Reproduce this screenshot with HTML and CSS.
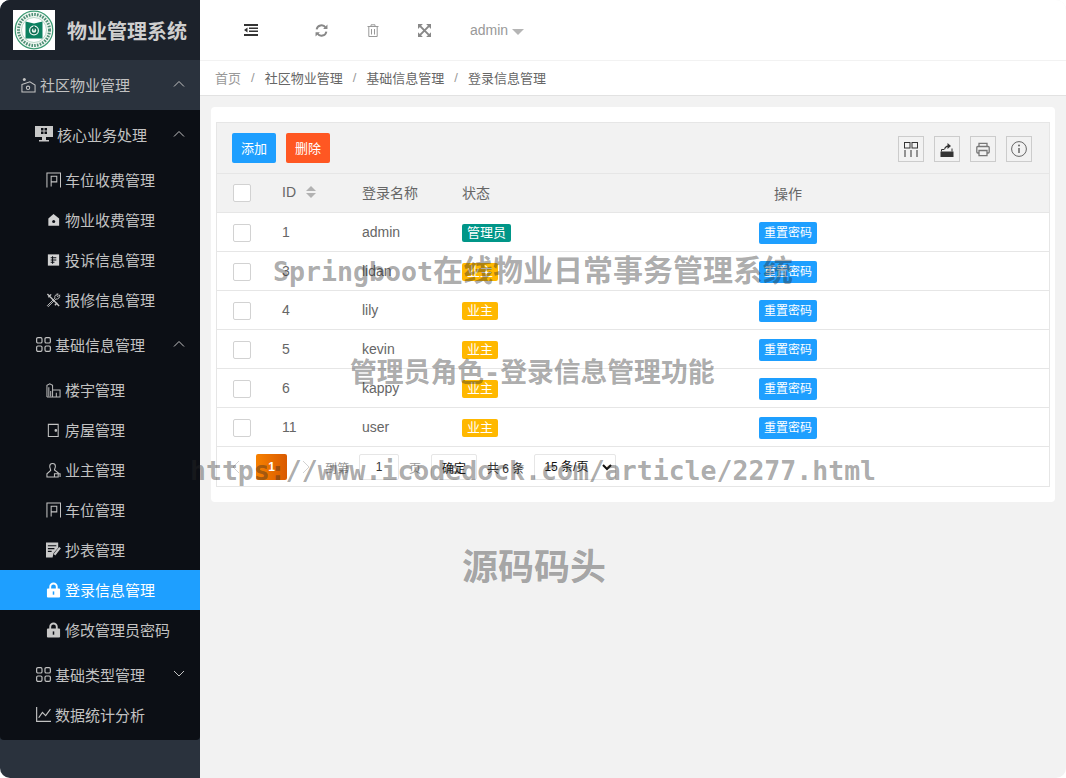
FILE: index.html
```html
<!DOCTYPE html>
<html lang="zh-CN">
<head>
<meta charset="utf-8">
<title>物业管理系统</title>
<link rel="stylesheet" href="styles.css">
</head>
<body>
<div class="app">
  <aside class="sidebar">
    <div class="brand">
      <svg class="logo" viewBox="0 0 42 40"><rect width="42" height="40" fill="#fff"/><circle cx="21" cy="20" r="18.800" fill="#f1f7f2" stroke="#3b9a73" stroke-width="1.200"/><circle cx="21" cy="20" r="15.500" fill="none" stroke="#4d8f75" stroke-width="3" stroke-dasharray="1.600 1.200"/><circle cx="21" cy="20" r="12.500" fill="#fff" stroke="#8dbfa8" stroke-width=".6"/><path fill="#0c8060" d="M12.500 11.500 21 13.500l8.500-2v17h-17z"/><circle cx="21" cy="20.500" r="5" fill="#e8f3ee"/><circle cx="21" cy="20.500" r="3" fill="none" stroke="#0c6a50" stroke-width="1.500"/><rect x="20.300" y="16" width="1.400" height="4.500" fill="#0c6a50"/></svg>
      <span class="brand-name">物业管理系统</span>
    </div>
    <div class="top-item">
      <svg class="ic" viewBox="0 0 16 16" fill="none" stroke="#c4c4c4" stroke-width="1.100"><circle cx="3.500" cy="2" r="1.600" fill="#c4c4c4" stroke="none"/><path d="M1 7.500 9.500 4.500l5.500 3.500v7.500H1z"/><circle cx="7.500" cy="11" r="1.800"/></svg>
      <span>社区物业管理</span>
      <svg class="chev" viewBox="0 0 12 7" fill="none" stroke="#c2c2c2" stroke-width="1"><path d="M1 6.500 6 1.500l5 5"/></svg>
    </div>
    <nav class="menu">
      <div class="parent">
        <svg class="ic ic-par1" viewBox="0 0 18 16"><path fill="#c8c8c8" d="M0 0h18v11h-7v3h3v1.500H4V14h3v-3H0z"/><path fill="#0c0f15" d="M6 2h2.500v2.500H6zm3.500 0H12v2.500H9.500zM6 5.500h2.500V8H6zm3.500 0H12V8H9.500z"/></svg>
        <span>核心业务处理</span>
        <svg class="chev" viewBox="0 0 12 7" fill="none" stroke="#c2c2c2" stroke-width="1"><path d="M1 6.500 6 1.500l5 5"/></svg>
      </div>
      <ul class="sub">
        <li class="sub-item"><svg class="ic" viewBox="0 0 16 16" fill="none" stroke="#c4c4c4" stroke-width="1.100"><path d="M1 16V.6h14.500V16"/><path d="M5.500 15V4h6v6h-6"/></svg><span>车位收费管理</span></li>
        <li class="sub-item"><svg class="ic" viewBox="0 0 16 16"><path fill="#d2d2d2" d="M8 1.500 14 6.500V14H2.500V6.500z"/><circle cx="8.200" cy="9.500" r="1.600" fill="#0c0f15"/></svg><span>物业收费管理</span></li>
        <li class="sub-item"><svg class="ic" viewBox="0 0 16 16"><rect x="2" y="2" width="12" height="12" fill="#d2d2d2"/><path stroke="#0c0f15" stroke-width="1.100" d="M5 5.500h6M5 8h6M5 10.500h4M7 4v8"/></svg><span>投诉信息管理</span></li>
        <li class="sub-item"><svg class="ic" viewBox="0 0 16 16" fill="none" stroke="#c4c4c4" stroke-width="1.500"><path d="M1.500 1.500 14 14.500M2.500 5 5.500 2M12 11l-2.500 2.500"/><path d="M14.500 2.500 12.500 4.500 11.500 3.500 13 1.500A3.500 3.500 0 0 0 9.500 6L1.500 14l1 1 8-8a3.500 3.500 0 0 0 4-4.500z" stroke-width="1"/></svg><span>报修信息管理</span></li>
      </ul>
      <div class="parent">
        <svg class="ic ic-par2" viewBox="0 0 14 14" fill="none" stroke="#c2c2c2" stroke-width="1.100"><rect x=".6" y=".6" width="5" height="5" rx="1.200"/><rect x="8.400" y=".6" width="5" height="5" rx="1.200"/><rect x=".6" y="8.400" width="5" height="5" rx="1.200"/><rect x="8.400" y="8.400" width="5" height="5" rx="1.200"/></svg>
        <span>基础信息管理</span>
        <svg class="chev" viewBox="0 0 12 7" fill="none" stroke="#c2c2c2" stroke-width="1"><path d="M1 6.500 6 1.500l5 5"/></svg>
      </div>
      <ul class="sub">
        <li class="sub-item"><svg class="ic" viewBox="0 0 16 16" fill="none" stroke="#b8b8b8" stroke-width="1.100"><path d="M1 15.500V3l3-1.500L7 3v12.500M7 8h8v7.500H1"/><path d="M3 5v10M5 9v6M11 11v4.500"/></svg><span>楼宇管理</span></li>
        <li class="sub-item"><svg class="ic" viewBox="0 0 16 16" fill="none" stroke="#c4c4c4" stroke-width="1.100"><path d="M2.500 2H13v13H2.500z"/><circle cx="10.500" cy="8.500" r=".9" fill="#c4c4c4"/></svg><span>房屋管理</span></li>
        <li class="sub-item"><svg class="ic" viewBox="0 0 16 16" fill="none" stroke="#c4c4c4" stroke-width="1.100"><path d="M7 1a3 3 0 0 1 3 3c0 2-1 3-1 4l4 3v4.500H1V12l4-3.500C5 7 4 6 4 4a3 3 0 0 1 3-3z"/><path d="M9 15.500V12h6v3.500"/></svg><span>业主管理</span></li>
        <li class="sub-item"><svg class="ic" viewBox="0 0 16 16" fill="none" stroke="#c4c4c4" stroke-width="1.100"><path d="M1 16V.6h14.500V16"/><path d="M5.500 15V4h6v6h-6"/></svg><span>车位管理</span></li>
        <li class="sub-item"><svg class="ic" viewBox="0 0 16 16"><path fill="#c8c8c8" d="M0 0h13v5.500L8 11.500 7 16H0z"/><path stroke="#0c0f15" stroke-width="1.200" d="M2 3.500h9M2 6.500h7M2 9.500h4"/><path stroke="#c8c8c8" stroke-width="2.400" d="m9 13 6-7.500"/></svg><span>抄表管理</span></li>
        <li class="sub-item active"><svg class="ic" viewBox="0 0 16 16"><path fill="none" stroke="#fff" stroke-width="2" d="M4.500 7V4.500a3.500 3.500 0 0 1 7 0V7"/><rect x="1" y="6.500" width="14" height="9.500" rx="1" fill="#fff"/><rect x="7.200" y="9.500" width="1.600" height="3.500" fill="#1e9fff"/></svg><span>登录信息管理</span></li>
        <li class="sub-item"><svg class="ic" viewBox="0 0 16 16"><path fill="none" stroke="#c8c8c8" stroke-width="2" d="M4.500 7V4.500a3.500 3.500 0 0 1 7 0V7"/><rect x="1" y="6.500" width="14" height="9.500" rx="1" fill="#c8c8c8"/><rect x="7.200" y="9.500" width="1.600" height="3.500" fill="#0c0f15"/></svg><span>修改管理员密码</span></li>
      </ul>
      <div class="parent">
        <svg class="ic ic-par2" viewBox="0 0 14 14" fill="none" stroke="#c2c2c2" stroke-width="1.100"><rect x=".6" y=".6" width="5" height="5" rx="1.200"/><rect x="8.400" y=".6" width="5" height="5" rx="1.200"/><rect x=".6" y="8.400" width="5" height="5" rx="1.200"/><rect x="8.400" y="8.400" width="5" height="5" rx="1.200"/></svg>
        <span>基础类型管理</span>
        <svg class="chev" viewBox="0 0 12 7" fill="none" stroke="#c2c2c2" stroke-width="1"><path d="M1 1 6 6l5-5"/></svg>
      </div>
      <div class="parent">
        <svg class="ic ic-par2" viewBox="0 0 14 14" fill="none" stroke="#c2c2c2" stroke-width="1.100"><path d="M.6 0v13.400H14M2.500 10 6 5l3 3 4.500-6"/></svg>
        <span>数据统计分析</span>
      </div>
    </nav>
    <div class="sidebar-foot"></div>
  </aside>

  <main class="main">
    <header class="topbar">
      <svg class="tb-ic tb-indent" viewBox="0 0 14 12"><path fill="#333" d="M0 0h14v2H0zM5 3.500h9v1.500H5zM5 6.500h9V8H5zM0 10h14v2H0zM3.500 3.500v5L0 6z"/></svg>
      <svg class="tb-ic tb-refresh" viewBox="0 0 12 12" fill="none" stroke="#888" stroke-width="1.800"><path d="M1.500 5A4.600 4.600 0 0 1 9.800 3.200M10.500 7A4.600 4.600 0 0 1 2.200 8.800"/><path fill="#888" stroke="none" d="M11.500.500v4h-4zM.500 11.500v-4h4z"/></svg>
      <svg class="tb-ic tb-trash" viewBox="0 0 12 13" fill="none" stroke="#999" stroke-width="1"><path d="M.5 2.500h11M4 2.500V.8h4v1.700M1.800 2.500v10h8.400v-10M4.500 5v5.500M7.500 5v5.500"/></svg>
      <svg class="tb-ic tb-expand" viewBox="0 0 12 12"><path fill="#888" d="M0 0h4.500L0 4.500zM12 0v4.500L7.500 0zM0 12V7.500L4.500 12zM12 12H7.500L12 7.500z"/><path stroke="#888" stroke-width="1.800" d="m2 2 8 8M10 2l-8 8"/></svg>
      <span class="user">admin</span><span class="caret"></span>
    </header>
    <div class="crumbs">
      <span class="crumb-first">首页</span><span class="sep">/</span><span>社区物业管理</span><span class="sep">/</span><span>基础信息管理</span><span class="sep">/</span><span>登录信息管理</span>
    </div>
    <div class="content">
      <section class="card">
        <div class="grid">
          <div class="toolbar">
            <button class="btn btn-blue">添加</button>
            <button class="btn btn-red">删除</button>
            <div class="tools">
              <span class="tool"><svg viewBox="0 0 14 15" fill="none" stroke="#333" stroke-width="1"><rect x=".5" y=".5" width="5.500" height="5.500"/><rect x="8" y=".5" width="5.500" height="5.500"/><path d="M1 8v7M7 8v7M13 8v7"/></svg></span>
              <span class="tool"><svg viewBox="0 0 14 15"><path fill="#333" d="M.5 9.500h13V15H.5z"/><path fill="none" stroke="#333" d="M1.500 9.500V7.500h2.500M12 9.500V6.500"/><path fill="#333" d="M4 7.500C4.500 4.500 6.500 3.500 7.500 3.500V1L11 4 7.500 7V5C6.500 5 5.500 6 5 7.500z"/></svg></span>
              <span class="tool"><svg viewBox="0 0 14 14" fill="none" stroke="#777" stroke-width="1.300"><path d="M3 4V.8h8V4M3 10.500H1.800a1 1 0 0 1-1-1V5a1 1 0 0 1 1-1h10.400a1 1 0 0 1 1 1v4.500a1 1 0 0 1-1 1H11"/><path d="M3 8h8v5.200H3z"/></svg></span>
              <span class="tool tool-info"><svg viewBox="0 0 16 16" fill="none" stroke="#666" stroke-width="1"><circle cx="8" cy="8" r="7.400"/><path d="M8 7v5" stroke-width="1.500"/><circle cx="8" cy="4.500" r="1" fill="#666" stroke="none"/></svg></span>
            </div>
          </div>
          <table class="data">
            <colgroup><col class="c-check"><col class="c-id"><col class="c-name"><col class="c-state"><col></colgroup>
            <thead>
              <tr><th><span class="box"></span></th><th><span class="th-id">ID<span class="sort"><i class="up"></i><i class="down"></i></span></span></th><th>登录名称</th><th>状态</th><th class="center">操作</th></tr>
            </thead>
            <tbody>
              <tr><td><span class="box"></span></td><td>1</td><td>admin</td><td><span class="tag tag-green">管理员</span></td><td class="center"><span class="reset">重置密码</span></td></tr>
              <tr><td><span class="box"></span></td><td>3</td><td>lidan</td><td><span class="tag tag-yellow">业主</span></td><td class="center"><span class="reset">重置密码</span></td></tr>
              <tr><td><span class="box"></span></td><td>4</td><td>lily</td><td><span class="tag tag-yellow">业主</span></td><td class="center"><span class="reset">重置密码</span></td></tr>
              <tr><td><span class="box"></span></td><td>5</td><td>kevin</td><td><span class="tag tag-yellow">业主</span></td><td class="center"><span class="reset">重置密码</span></td></tr>
              <tr><td><span class="box"></span></td><td>6</td><td>kappy</td><td><span class="tag tag-yellow">业主</span></td><td class="center"><span class="reset">重置密码</span></td></tr>
              <tr><td><span class="box"></span></td><td>11</td><td>user</td><td><span class="tag tag-yellow">业主</span></td><td class="center"><span class="reset">重置密码</span></td></tr>
            </tbody>
          </table>
          <div class="pager">
            <svg class="pg-arrow" viewBox="0 0 8 14" fill="none" stroke="#d2d2d2"><path d="M7 1 1 7l6 6"/></svg>
            <span class="pg-cur">1</span>
            <svg class="pg-arrow" viewBox="0 0 8 14" fill="none" stroke="#d2d2d2"><path d="m1 1 6 6-6 6"/></svg>
            <span class="pg-label pg-first">到第</span>
            <input class="pg-input" value="1">
            <span class="pg-label">页</span>
            <button class="pg-go">确定</button>
            <span class="pg-total">共 6 条</span>
            <select class="pg-size"><option>15 条/页</option></select>
          </div>
        </div>
      </section>
    </div>
  </main>

  <div class="wm wm-1"><span class="wm-latin">Springboot</span>在线物业日常事务管理系统</div>
  <div class="wm wm-2">管理员角色<span class="wm-latin">-</span>登录信息管理功能</div>
  <div class="wm wm-3">https://www.icodedock.com/article/2277.html</div>
  <div class="wm wm-4">源码码头</div>
</div>
</body>
</html>
```
FILE: styles.css
```css
* { box-sizing: border-box; }
html, body { margin: 0; height: 100%; background: #fff; }
body { font-family: "Liberation Sans", "Noto Sans CJK SC", sans-serif; font-size: 14px; color: #666; overflow: hidden; }
ul { margin: 0; padding: 0; list-style: none; }
svg { display: block; flex: none; }

.app { position: relative; display: flex; width: 1066px; height: 778px; border-radius: 10px; overflow: hidden; }

.sidebar { width: 200px; flex: none; display: flex; flex-direction: column; background: #2a323d; font-size: 15px; color: #c2c2c2; }
.brand { height: 60px; display: flex; align-items: center; padding-left: 13px; background: #1c222b; }
.logo { width: 42px; height: 40px; }
.brand-name { margin-left: 12px; font-size: 20px; font-weight: 700; color: #cfcfcf; }
.top-item { height: 50px; display: flex; align-items: center; padding-left: 21px; background: #2a323d; position: relative; }
.top-item .ic { width: 15px; height: 16px; margin-right: 4px; }
.top-item span, .parent span, .sub-item span { margin-top: -1px; }
.menu { padding: 5px 0; background: #0c0f15; border-radius: 0 0 4px 4px; }
.parent { height: 40px; display: flex; align-items: center; padding-left: 35px; position: relative; }
.chev { position: absolute; right: 15px; top: 50%; width: 12px; height: 7px; margin-top: -5px; }
.top-item .chev { margin-top: -5px; }
.ic-par1 { width: 18px; height: 16px; margin-right: 4px; margin-top: -2px; }
.ic-par2 { width: 15px; height: 15px; margin-right: 4px; margin-left: 1px; margin-top: -2px; }
.sub { padding: 5px 0; }
.sub-item { height: 40px; display: flex; align-items: center; padding-left: 46px; }
.sub-item .ic { width: 15px; height: 16px; margin-right: 4px; }
.sub-item.active { background: #1e9fff; color: #fff; }
.sidebar-foot { flex: 1; }

.main { flex: 1; min-width: 0; display: flex; flex-direction: column; background: #f2f2f2; }
.topbar { height: 61px; flex: none; display: flex; align-items: center; background: #fff; border-bottom: 1px solid #f2f2f2; padding-left: 44px; }
.tb-ic { flex: none; }
.tb-indent { width: 14px; height: 12px; }
.tb-refresh { width: 13px; height: 13px; margin-left: 57px; }
.tb-trash { width: 12px; height: 13px; margin-left: 39px; }
.tb-expand { width: 13px; height: 13px; margin-left: 39px; }
.user { margin-left: 39px; color: #999; }
.caret { margin-left: 4px; margin-top: 3px; width: 0; height: 0; border: 6px solid transparent; border-top: 6px solid #b5b5b5; border-bottom: 0; border-left-width: 6.5px; border-right-width: 6.5px; }
.crumbs { height: 35px; flex: none; display: flex; align-items: center; padding: 0 0 2px 15px; background: #fff; border-bottom: 1px solid #e2e2e2; font-size: 13px; color: #666; }
.crumb-first { color: #999; }
.sep { margin: 0 10px; color: #999; }

.content { flex: 1; padding: 11px 11px 0 11px; }
.card { background: #fff; border-radius: 4px; padding: 15px 5px; }
.grid { border: 1px solid #e6e6e6; }

.toolbar { height: 51px; display: flex; align-items: center; padding: 0 17px 0 15px; background: #f2f2f2; border-bottom: 1px solid #e6e6e6; }
.btn { height: 30px; width: 44px; padding: 0 0 2px; border: 0; border-radius: 2px; color: #fff; font: 13px "Liberation Sans", "Noto Sans CJK SC", sans-serif; margin-right: 10px; }
.btn-blue { background: #1e9fff; }
.btn-red { background: #ff5722; }
.tools { margin-left: auto; display: flex; gap: 10px; padding-top: 2px; }
.tool { width: 26px; height: 26px; border: 1px solid #ccc; display: flex; align-items: center; justify-content: center; }
.tool svg { width: 14px; height: 15px; }
.tool-info svg { width: 16px; height: 16px; }

.data { width: 100%; border-collapse: collapse; table-layout: fixed; }
.c-check { width: 50px; }
.c-id { width: 80px; }
.c-name { width: 100px; }
.c-state { width: 80px; }
.data th { height: 38px; background: #f2f2f2; font-weight: 400; text-align: left; padding: 0 15px 1px; border-bottom: 1px solid #e6e6e6; }
.data td { height: 39px; padding: 0 15px; border-bottom: 1px solid #e6e6e6; }
.data .center { text-align: center; padding: 0; }
.box { display: block; width: 18px; height: 18px; margin: 2px 0 0 1px; background: #fff; border: 1px solid #d2d2d2; border-radius: 2px; }
.th-id { display: inline-flex; align-items: center; }
.sort { display: inline-flex; flex-direction: column; gap: 2px; margin-left: 10px; }
.sort i { width: 0; height: 0; border-left: 5px solid transparent; border-right: 5px solid transparent; }
.sort .up { border-bottom: 5px solid #b2b2b2; }
.sort .down { border-top: 5px solid #b2b2b2; }
.tag { display: inline-block; height: 18px; line-height: 18px; margin-top: 2px; padding: 0 5px; border-radius: 2px; color: #fff; font-size: 13px; vertical-align: middle; }
.tag-green { background: #009688; }
.tag-yellow { background: #ffb800; }
.reset { display: inline-block; height: 22px; line-height: 22px; width: 58px; margin-top: 2px; border-radius: 2px; background: #1e9fff; color: #fff; font-size: 12px; vertical-align: middle; text-align: center; }

.pager { height: 39px; display: flex; align-items: center; padding: 2px 0 0 15px; font-size: 12px; }
.pg-arrow { width: 8px; height: 14px; }
.pg-cur { width: 31px; height: 26px; margin: 0 15px 0 16px; border-radius: 2px; background: linear-gradient(90deg, #f78100, #d95a00); color: #fff; text-align: center; line-height: 26px; font-weight: 700; }
.pg-label { color: #999; margin-left: 10px; }
.pg-first { margin-left: 15px; }
.pg-input { width: 40px; height: 26px; margin-left: 10px; padding: 0; border: 1px solid #e6e6e6; border-radius: 2px; background: #fff; text-align: center; font: 12px "Liberation Sans", sans-serif; color: #333; }
.pg-go { width: 46px; height: 26px; margin-left: 10px; padding: 0; border: 1px solid #e6e6e6; border-radius: 2px; background: #fff; color: #111; font: 12px "Liberation Sans", "Noto Sans CJK SC", sans-serif; }
.pg-total { margin-left: 10px; color: #333; }
.pg-size { width: 82px; height: 26px; margin-left: 10px; padding: 0 0 0 5px; border: 1px solid #e6e6e6; border-radius: 2px; background: #fff; color: #111; font: 12px "Liberation Sans", "Noto Sans CJK SC", sans-serif; }

.wm { position: absolute; white-space: nowrap; font-family: "DejaVu Sans Mono", "Noto Sans CJK SC", monospace; font-weight: 700; color: rgba(40, 40, 40, .4); pointer-events: none; line-height: 1; }
.wm-1 { left: 273px; top: 256px; font-size: 30px; }
.wm-1 .wm-latin { font-size: 26.6px; }
.wm-2 { left: 350px; top: 360px; font-size: 26.8px; }
.wm-3 { left: 190px; top: 458px; font-size: 26.5px; }
.wm-4 { left: 462px; top: 550px; font-size: 36px; }
```
